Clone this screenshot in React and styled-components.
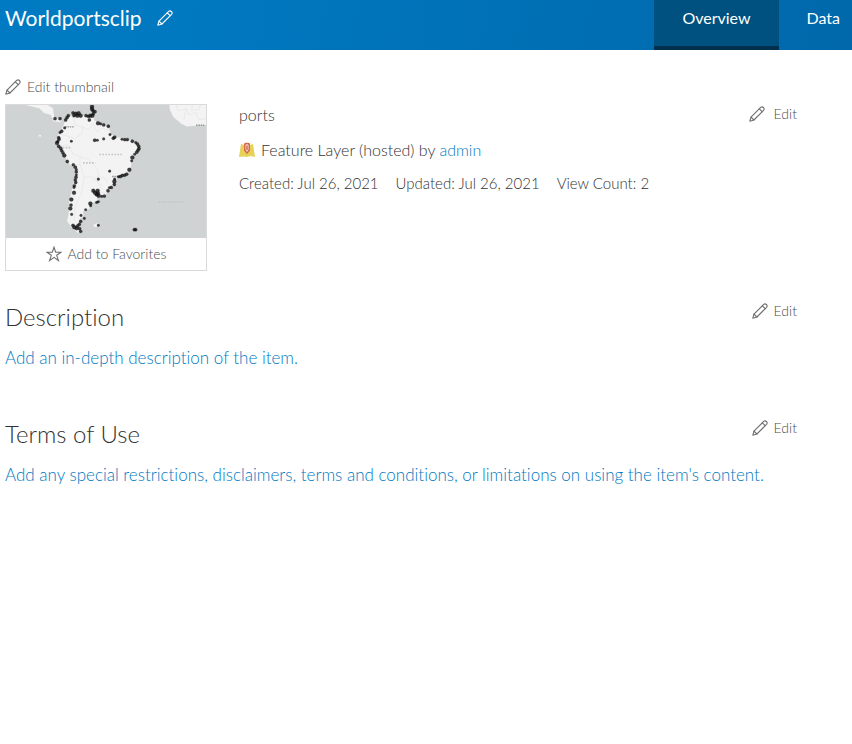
import React from "react";
import styled, { createGlobalStyle } from "styled-components";

const GlobalStyle = createGlobalStyle`
  *, *::before, *::after { box-sizing: border-box; }
  body {
    margin: 0;
    background: #fff;
    color: #323232;
    font-family: Lato, "Open Sans", sans-serif;
    font-variant-ligatures: none;
    font-weight: 300;
    font-size: 16px;
    line-height: 24px;
  }
  button { font: inherit; color: inherit; background: none; border: 0; padding: 0; cursor: pointer; }
  h1, h2, p { margin: 0; font-weight: inherit; }
  a { color: #0079c1; text-decoration: none; }
  svg { display: block; flex: none; }
`;

const Header = styled.header`
  display: flex;
  justify-content: space-between;
  height: 50px;
  overflow: hidden;
  color: #fff;
  background: linear-gradient(100deg, #007ac2 0%, #0079c1 20%, #0068ab 100%);
`;

const TitleBar = styled.div`
  display: flex;
  align-items: center;
  gap: 15px;
  height: 36px;
  padding-left: 5px;
`;

const Title = styled.h1`
  font-size: 21px;
  font-weight: 400;
`;

const Tabs = styled.nav`
  display: flex;
`;

const Tab = styled.a`
  padding: 6px ${(p) => (p.$last ? "12px" : "28px")} 0 28px;
  font-size: 16px;
  font-weight: 400;
  color: #fff;
  background: ${(p) => (p.$active ? "#005180" : "transparent")};
  border-bottom: 4px solid ${(p) => (p.$active ? "#00304d" : "transparent")};
`;

const Main = styled.main`
  padding: 26px 55px 0 5px;
`;

const Summary = styled.section`
  display: grid;
  grid-template-columns: 202px 1fr auto;
  column-gap: 32px;
`;

const IconButton = styled.button`
  && {
    display: flex;
    align-items: center;
    gap: ${(p) => p.$gap || "6px"};
    height: 22px;
    font-size: 14px;
    color: #4c4c4c;
  }
  svg { color: #6e6e6e; }
`;

const SummaryEdit = styled(IconButton)`
  && { margin-top: 27px; }
`;

const Card = styled.div`
  margin-top: 6px;
  border: 1px solid #dadada;
`;

const MapPicture = styled.svg`
  width: 100%;
  height: 133px;
  background: #cfd3d4;
`;

const Favorite = styled(IconButton)`
  && {
    justify-content: center;
    width: 100%;
    height: 32px;
  }
`;

const Details = styled.div`
  display: flex;
  flex-direction: column;
  padding-top: 27px;
`;

const Snippet = styled.p`
  font-size: 16px;
`;

const TypeLine = styled.p`
  display: flex;
  align-items: center;
  gap: 6px;
  margin-top: 11px;
  font-size: 16px;
`;

const Facts = styled.div`
  display: flex;
  gap: 17px;
  margin-top: 9px;
  font-size: 15px;
`;

const Section = styled.section`
  margin-top: ${(p) => (p.$first ? "29px" : "47px")};
`;

const SectionHead = styled.div`
  display: flex;
  justify-content: space-between;
  align-items: flex-start;
`;

const Heading = styled.h2`
  font-size: 24px;
  line-height: 34px;
`;

const Prompt = styled.a`
  display: block;
  margin-top: 12px;
  font-size: 17px;
`;

const Pencil = () => (
  <svg width="16" height="16" viewBox="0 0 16 16" fill="none" stroke="currentColor" strokeWidth="1.1" strokeLinejoin="round" strokeLinecap="round" aria-hidden="true">
    <path d="M.8 15.2 2 11.1 11.7 1.4Q13.1.2 14.4 1.5 15.8 2.9 14.6 4.3L4.9 14Z" />
    <path d="M10.3 2.8 13.2 5.7M2 11.1 4.9 14" />
  </svg>
);

const Star = () => (
  <svg width="16" height="16" viewBox="0 0 16 16" fill="none" stroke="currentColor" strokeWidth="1.1" aria-hidden="true">
    <path d="M8 1.2 9.7 6.2H15L10.7 9.3 12.4 14.6 8 11.4 3.6 14.6 5.3 9.3 1 6.2H6.3Z" />
  </svg>
);

const LayerIcon = () => (
  <svg width="16" height="16" viewBox="0 0 16 16" aria-hidden="true">
    <path d="M2 2 5 3 8 2 11 3 14 2 16 15 11.5 14 8 15 4.5 14.5 0 15Z" fill="#e6d257" />
    <path d="M8 12.3 5 8.5V2.5Q5 .7 6.5.7H9.5Q11 .7 11 2.5V8.5Z" fill="#d56a4d" />
    <path d="M8 10 6.5 7.5V3Q6.5 2.2 8 2.2T9.5 3V7.5Z" fill="#f5dfd8" />
    <path d="M8 3.5V8" stroke="#c2543a" strokeWidth="1.2" />
  </svg>
);

const ports = [
  [165,143,5],[180,143,5],[197,147,5],[201,140,5],[205,134,5],[219,126,5],[222,134,5],[227,128,6],[232,134,6],[236,127,6],[242,134,6],
  [258,134,5],[265,136,5],[271,134,6],[277,134,6],[268,147,5],[280,128,5],[285,122,5],[276,114,6],[276,107,6],[279,119,5],
  [294,157,6],[302,159,4],[311,162,5],[325,166,5],[194,171,4],[185,181,5],[180,185,4],[176,200,5],[177,205,5],[171,216,6],[173,212,5],[176,226,5],
  [182,232,5],[185,239,5],[189,246,5],[193,254,6],[202,272,5],[214,211,4],[284,208,5],[292,208,4],[311,204,4],[330,191,4],[340,202,5],[344,199,5],
  [366,205,4],[374,206,5],[382,206,5],[397,211,5],[407,215,4],[412,219,5],[416,226,5],[417,233,5],[414,238,5],[410,244,5],[404,250,4],[397,260,6],[395,270,4],
  [388,297,6],[380,310,5],[374,313,5],[367,314,5],[361,317,5],[355,318,4],[344,325,4],[343,332,6],[343,341,5],[334,350,5],[328,351,4],[324,360,5],
  [313,376,5],[305,377,4],[296,375,6],[290,371,6],[285,366,6],[280,360,6],[293,360,6],[294,368,6],[329,301,4],[295,325,4],
  [220,282,5],[226,289,5],[229,296,4],[229,303,5],[229,312,4],[228,319,5],[226,327,5],[227,335,5],[223,345,5],[222,350,4],[222,366,6],[214,386,6],
  [213,403,5],[211,413,6],[215,431,4],[271,398,6],[272,405,4],[290,395,4],[295,393,4],[257,417,4],[243,434,4],[253,443,4],[242,452,5],[238,461,5],
  [219,464,5],[223,470,6],[230,473,6],[233,466,5],[239,474,5],[242,482,5],[295,464,4],[403,477,5],[407,477,5],
];

const WorldMap = () => (
  <MapPicture viewBox="18 102 600 400" preserveAspectRatio="none" role="img" aria-label="Map of ports in South America">
    <g fill="#f3f3f3">
      <path d="M78 102 98 107 118 112 132 126 153 132 160 151 182 154 185 145 163 139 159 112 142 102Z" />
      <path d="M190 165 198 143 210 134 221 138 245 133 281 135 282 148 307 160 325 167 333 190 350 199 378 203 407 214 419 229 415 243 396 260 393 287 382 311 355 320 343 333 342 347 320 367 313 377 290 376 293 391 269 399 269 414 248 423 251 435 237 448 239 465 249 484 233 486 214 469 201 451 206 430 207 395 218 347 228 296 209 280 194 257 180 236 166 215 176 187Z" />
      <path d="M508 102H618V162L560 167 542 157 520 138 510 118Z" />
      <path d="M116 192h7v5h-7ZM280 463l9-5 9 2-2 8-13 1Z" />
    </g>
    <g fill="none" stroke="#e4e4e4" strokeWidth="2">
      <path d="M221 138 225 163 248 169 245 190 224 202 204 196 181 190M248 169 267 177 280 157M280 157 291 183 306 171 326 179M180 225 204 222 218 248 240 257 240 279 225 287M240 257 268 267 292 294 296 315 315 323 323 337M240 279 252 320 245 365 226 407 222 451M296 315 281 325 305 344 293 365 320 367M252 320 269 316 281 325" />
      <path d="M529 102 534 120 558 113 568 132 587 124 596 146 618 144M577 102 575 118 597 116 601 102M558 113 552 146" />
    </g>
    <g fill="none" stroke="#c4c6c7" strokeWidth="5" strokeDasharray="5 4">
      <path d="M298 251H369M249 276H286M476 394H550M188 230H211" />
    </g>
    <path d="M195 168H223M336 317H359M588 163H613" fill="none" stroke="#999b9b" strokeWidth="4" strokeDasharray="5 2" />
    <g fill="#111" fillOpacity="0.8" stroke="#111" strokeOpacity="0.25" strokeWidth="2">
      {ports.map(([x, y, r]) => <circle key={`${x}-${y}`} cx={x} cy={y} r={r} />)}
    </g>
  </MapPicture>
);

const TextSection = ({ title, prompt, first }) => (
  <Section $first={first}>
    <SectionHead>
      <Heading>{title}</Heading>
      <IconButton aria-label={`Edit ${title}`}><Pencil />Edit</IconButton>
    </SectionHead>
    <Prompt href="#edit">{prompt}</Prompt>
  </Section>
);

export default function App() {
  return (
    <>
      <GlobalStyle />
      <Header>
        <TitleBar>
          <Title>Worldportsclip</Title>
          <button aria-label="Edit title"><Pencil /></button>
        </TitleBar>
        <Tabs>
          <Tab href="#overview" $active aria-current="page">Overview</Tab>
          <Tab href="#data" $last>Data</Tab>
        </Tabs>
      </Header>
      <Main>
        <Summary>
          <div>
            <IconButton><Pencil />Edit thumbnail</IconButton>
            <Card>
              <WorldMap />
              <Favorite><Star />Add to Favorites</Favorite>
            </Card>
          </div>
          <Details>
            <Snippet>ports</Snippet>
            <TypeLine>
              <LayerIcon />
              <span>Feature Layer (hosted) by <a href="#admin">admin</a></span>
            </TypeLine>
            <Facts>
              <span>Created: Jul 26, 2021</span>
              <span>Updated: Jul 26, 2021</span>
              <span>View Count: 2</span>
            </Facts>
          </Details>
          <SummaryEdit $gap="9px" aria-label="Edit summary"><Pencil />Edit</SummaryEdit>
        </Summary>
        <TextSection first title="Description" prompt="Add an in-depth description of the item." />
        <TextSection title="Terms of Use" prompt="Add any special restrictions, disclaimers, terms and conditions, or limitations on using the item's content." />
      </Main>
    </>
  );
}
